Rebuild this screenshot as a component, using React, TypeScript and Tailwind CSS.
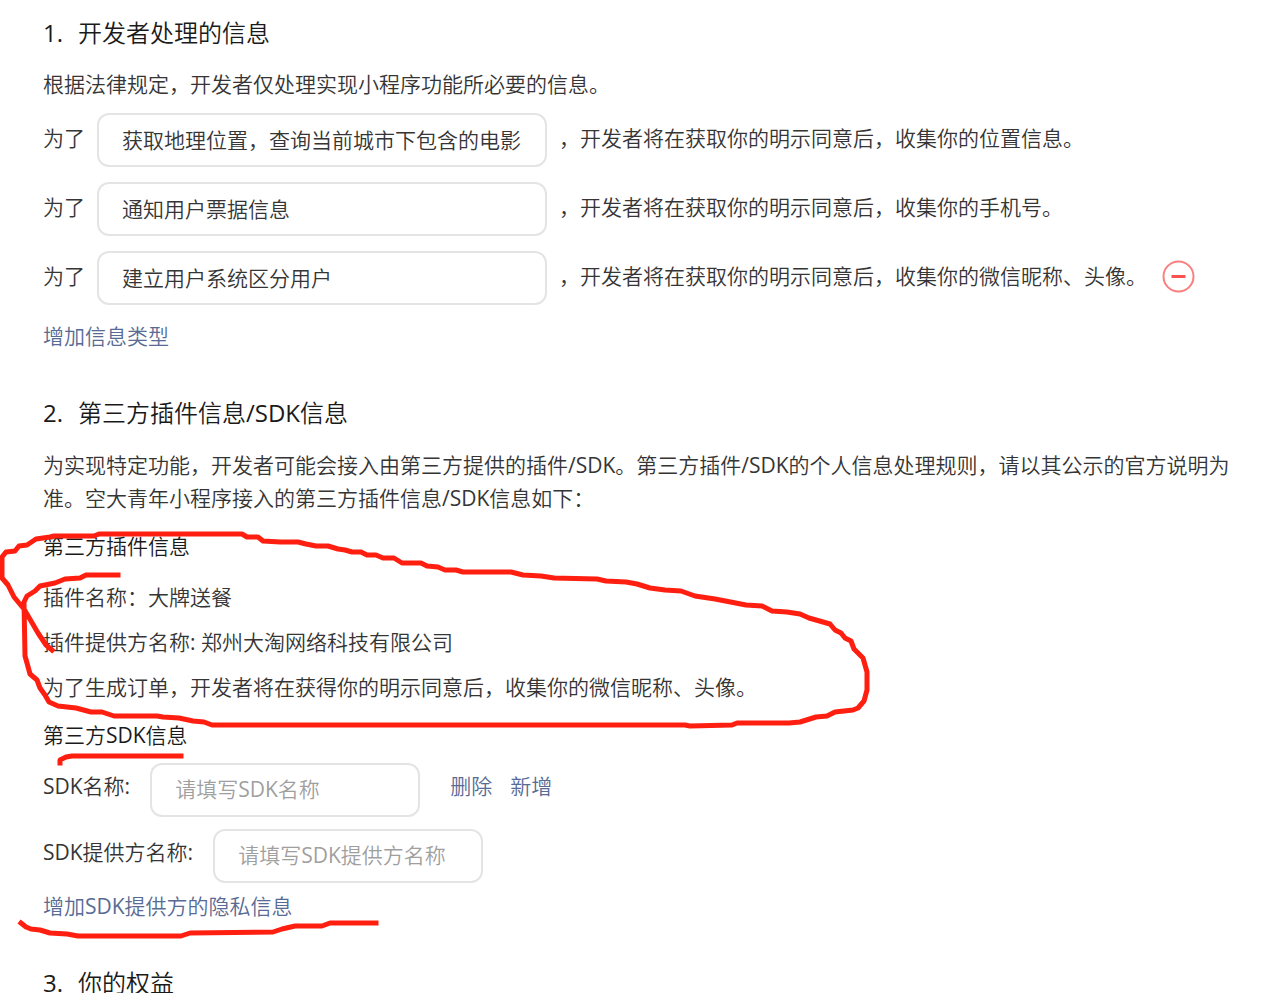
import { useState } from "react";

const purposes = [
  { id: "location", value: "获取地理位置，查询当前城市下包含的电影", info: "位置信息" },
  { id: "phone", value: "通知用户票据信息", info: "手机号" },
  { id: "profile", value: "建立用户系统区分用户", info: "微信昵称、头像", removable: true },
];

// Hand-drawn pen strokes, in page pixels
const strokes = [
  "M52 650 L46 645 L38 633 L24 609 L14 597 L8 585 L2 578 L2 557 L6 552 L15 551 L19 546 L27 545 L36 539 L50 537 L54 536 L94 536 L99 534 L242 534 L247 537 L258 537 L263 541 L280 542 L298 542 L306 544 L316 546 L328 546 L338 549 L345 550 L352 552 L361 552 L367 555 L376 555 L383 558 L394 558 L402 563 L421 563 L427 566 L438 567 L445 570 L456 570 L463 572 L511 572 L523 575 L541 576 L554 578 L597 579 L606 581 L626 582 L637 584 L650 588 L665 590 L681 591 L695 596 L715 599 L746 605 L762 606 L772 611 L787 612 L800 614 L809 618 L830 624 L835 630 L841 633 L845 638 L851 641 L854 649 L863 658 L867 672 L867 690 L864 701 L858 708 L853 710 L835 712 L827 716 L816 717 L800 722 L789 723 L737 723 L732 725 L690 726 L685 725 L212 725 L204 722 L193 721 L179 718 L163 717 L157 716 L114 716 L102 712 L91 712 L76 708 L58 706 L49 702 L45 695 L40 688 L37 680 L30 674 L27 663 L25 656 L24 602 L27 596 L35 591 L40 586 L55 583 L65 579 L80 578 L86 575 L118 575",
  "M60 763 L60 760 L66 757 L72 756 L181 756",
  "M21 923 L26 927 L31 929 L40 930 L50 933 L67 934 L78 936 L181 936 L190 933 L273 932 L282 929 L295 926 L322 926 L330 923 L376 923",
];

const fieldClass =
  "h-[54px] rounded-xl border-2 border-[#e4e4e4] bg-white px-[23px] pb-0.5 text-[21px] text-[#353535] outline-none placeholder:text-[#9f9f9f] placeholder:opacity-100 focus:border-[#c8c8c8]";

function Heading({ index, children }: { index: number; children: React.ReactNode }) {
  return (
    <h2 className="flex text-2xl leading-9 text-[#1a1a1a]">
      <span className="w-[35px]">{index}.</span>
      {children}
    </h2>
  );
}

function LinkText({ children }: { children: React.ReactNode }) {
  return (
    <a href="#" className="text-[#576b95] hover:underline">
      {children}
    </a>
  );
}

function PurposeRow({ id, initial, info, removable }: { id: string; initial: string; info: string; removable?: boolean }) {
  const [value, setValue] = useState(initial);

  return (
    <div className="flex items-center">
      <label htmlFor={id} className="pb-1">为了</label>
      <input
        id={id}
        type="text"
        value={value}
        onChange={(e) => setValue(e.target.value)}
        className={`${fieldClass} ml-3 w-[450px]`}
      />
      <span className="ml-3 pb-1">，开发者将在获取你的明示同意后，收集你的{info}。</span>
      {removable && (
        <button type="button" aria-label="删除" className="ml-[15px] shrink-0 cursor-pointer pb-1">
          <svg width={33} height={33} viewBox="0 0 33 33" fill="none">
            <circle cx="16.5" cy="16.5" r="15" stroke="#fb7f7f" strokeWidth={2} />
            <path d="M9.5 16.5h14" stroke="#fa5151" strokeWidth={3} />
          </svg>
        </button>
      )}
    </div>
  );
}

export default function App() {
  return (
    <main
      lang="zh-CN"
      className="relative h-screen overflow-hidden bg-white px-[43px] pt-[15px] font-['Open_Sans','Noto_Sans_CJK_SC_DemiLight','Noto_Sans_CJK_SC_Light','Noto_Sans_CJK_SC',sans-serif] text-[21px] leading-[33px] font-normal text-[#353535]"
    >
      <section>
        <Heading index={1}>开发者处理的信息</Heading>
        <p className="mt-[17px]">根据法律规定，开发者仅处理实现小程序功能所必要的信息。</p>
        <div className="mt-3 flex flex-col gap-[15px]">
          {purposes.map((p) => (
            <PurposeRow key={p.id} id={p.id} initial={p.value} info={p.info} removable={p.removable} />
          ))}
        </div>
        <p className="mt-[15px]">
          <LinkText>增加信息类型</LinkText>
        </p>
      </section>

      <section className="mt-[42px]">
        <Heading index={2}>第三方插件信息/SDK信息</Heading>
        <p className="mt-[18px]">
          为实现特定功能，开发者可能会接入由第三方提供的插件/SDK。第三方插件/SDK的个人信息处理规则，请以其公示的官方说明为准。空大青年小程序接入的第三方插件信息/SDK信息如下：
        </p>

        <h3 className="mt-[15px] text-[#1a1a1a]">第三方插件信息</h3>
        <div className="mt-[18px] flex flex-col gap-3">
          <p>插件名称：大牌送餐</p>
          <p>插件提供方名称: 郑州大淘网络科技有限公司</p>
          <p>为了生成订单，开发者将在获得你的明示同意后，收集你的微信昵称、头像。</p>
        </div>

        <h3 className="mt-[15px] text-[#1a1a1a]">第三方SDK信息</h3>
        <div className="mt-[11px] flex flex-col gap-3">
          <div className="flex items-center">
            <label htmlFor="sdk-name" className="pb-2">SDK名称:</label>
            <input id="sdk-name" type="text" placeholder="请填写SDK名称" className={`${fieldClass} ml-5 w-[270px]`} />
            <div className="ml-[30px] flex gap-[18px] pb-2">
              <LinkText>删除</LinkText>
              <LinkText>新增</LinkText>
            </div>
          </div>
          <div className="flex items-center">
            <label htmlFor="sdk-provider" className="pb-2">SDK提供方名称:</label>
            <input id="sdk-provider" type="text" placeholder="请填写SDK提供方名称" className={`${fieldClass} ml-5 w-[270px]`} />
          </div>
        </div>
        <p className="mt-[7px]">
          <LinkText>增加SDK提供方的隐私信息</LinkText>
        </p>
      </section>

      <section className="mt-[42px]">
        <Heading index={3}>你的权益</Heading>
      </section>

      <svg
        aria-hidden="true"
        width={900}
        height={993}
        viewBox="0 0 900 993"
        className="pointer-events-none absolute top-0 left-0"
        fill="none"
        stroke="#ff1f10"
        strokeWidth={5}
        strokeLinecap="square"
        strokeLinejoin="round"
      >
        {strokes.map((d, i) => (
          <path key={i} d={d} />
        ))}
      </svg>
    </main>
  );
}
